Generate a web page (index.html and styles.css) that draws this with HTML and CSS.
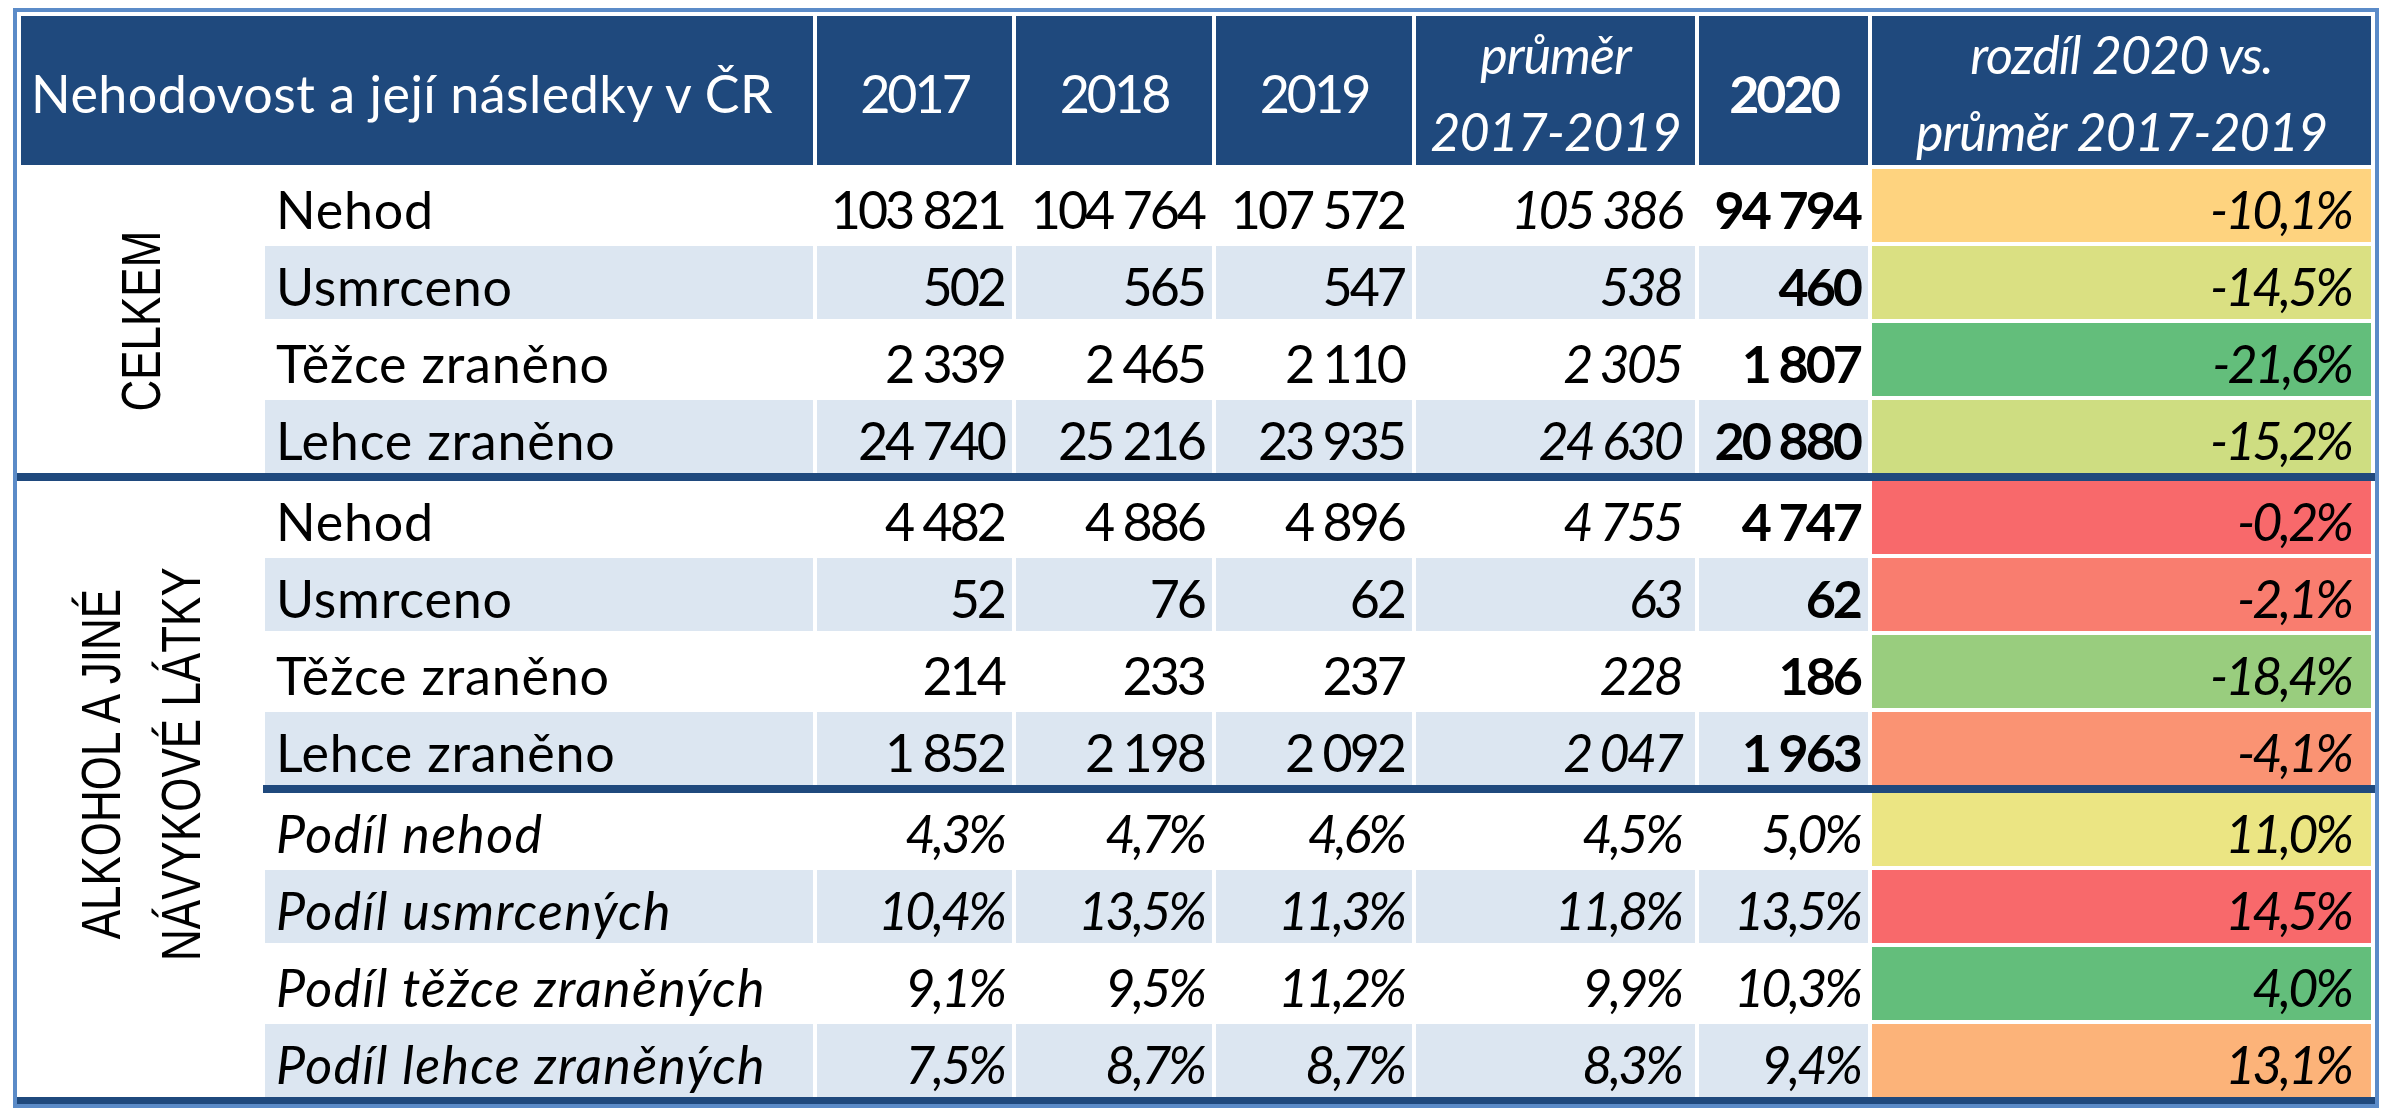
FILE: index.html
```html
<!DOCTYPE html>
<html lang="cs">
<head>
<meta charset="utf-8">
<title>Nehodovost a její následky v ČR</title>
<link rel="stylesheet" href="styles.css">
</head>
<body>
<div class="frame">
  <div class="table">
    <div class="h title">Nehodovost a její následky v ČR</div>
    <div class="h">2017</div>
    <div class="h">2018</div>
    <div class="h">2019</div>
    <div class="h h2">průměr<br>2017-2019</div>
    <div class="h b">2020</div>
    <div class="h h2">rozdíl 2020 vs.<br>průměr 2017-2019</div>

    <div class="side s1"><div class="vt">CELKEM</div></div>
    <div class="sep s-one"></div>
    <div class="side s2"><div class="vt">ALKOHOL A JINÉ<br>NÁVYKOVÉ LÁTKY</div></div>
    <div class="sep s-two"></div>
    <div class="sep s-bot"></div>

    <div class="c l">Nehod</div>
    <div class="c n">103 821</div><div class="c n">104 764</div><div class="c n">107 572</div>
    <div class="c n i avg">105 386</div><div class="c n b">94 794</div>
    <div class="c d" style="background:#FED37F">-10,1%</div>

    <div class="c l a">Usmrceno</div>
    <div class="c n a">502</div><div class="c n a">565</div><div class="c n a">547</div>
    <div class="c n a i avg">538</div><div class="c n a b">460</div>
    <div class="c d" style="background:#DAE082">-14,5%</div>

    <div class="c l">Těžce zraněno</div>
    <div class="c n">2 339</div><div class="c n">2 465</div><div class="c n">2 110</div>
    <div class="c n i avg">2 305</div><div class="c n b">1 807</div>
    <div class="c d" style="background:#63BE7B">-21,6%</div>

    <div class="c l a">Lehce zraněno</div>
    <div class="c n a">24 740</div><div class="c n a">25 216</div><div class="c n a">23 935</div>
    <div class="c n a i avg">24 630</div><div class="c n a b">20 880</div>
    <div class="c d" style="background:#CEDD81">-15,2%</div>

    <div class="c l">Nehod</div>
    <div class="c n">4 482</div><div class="c n">4 886</div><div class="c n">4 896</div>
    <div class="c n i avg">4 755</div><div class="c n b">4 747</div>
    <div class="c d" style="background:#F8696B">-0,2%</div>

    <div class="c l a">Usmrceno</div>
    <div class="c n a">52</div><div class="c n a">76</div><div class="c n a">62</div>
    <div class="c n a i avg">63</div><div class="c n a b">62</div>
    <div class="c d" style="background:#F97D6F">-2,1%</div>

    <div class="c l">Těžce zraněno</div>
    <div class="c n">214</div><div class="c n">233</div><div class="c n">237</div>
    <div class="c n i avg">228</div><div class="c n b">186</div>
    <div class="c d" style="background:#99CD7E">-18,4%</div>

    <div class="c l a">Lehce zraněno</div>
    <div class="c n a">1 852</div><div class="c n a">2 198</div><div class="c n a">2 092</div>
    <div class="c n a i avg">2 047</div><div class="c n a b">1 963</div>
    <div class="c d" style="background:#FA9373">-4,1%</div>

    <div class="c l i">Podíl nehod</div>
    <div class="c n i">4,3%</div><div class="c n i">4,7%</div><div class="c n i">4,6%</div>
    <div class="c n i avg">4,5%</div><div class="c n i">5,0%</div>
    <div class="c d" style="background:#EBE583">11,0%</div>

    <div class="c l a i">Podíl usmrcených</div>
    <div class="c n a i">10,4%</div><div class="c n a i">13,5%</div><div class="c n a i">11,3%</div>
    <div class="c n a i avg">11,8%</div><div class="c n a i">13,5%</div>
    <div class="c d" style="background:#F8696B">14,5%</div>

    <div class="c l i">Podíl těžce zraněných</div>
    <div class="c n i">9,1%</div><div class="c n i">9,5%</div><div class="c n i">11,2%</div>
    <div class="c n i avg">9,9%</div><div class="c n i">10,3%</div>
    <div class="c d" style="background:#63BE7B">4,0%</div>

    <div class="c l a i">Podíl lehce zraněných</div>
    <div class="c n a i">7,5%</div><div class="c n a i">8,7%</div><div class="c n a i">8,7%</div>
    <div class="c n a i avg">8,3%</div><div class="c n a i">9,4%</div>
    <div class="c d" style="background:#FCB379">13,1%</div>
  </div>
</div>
</body>
</html>
```
FILE: styles.css
```css
* { box-sizing: border-box; }

body {
  margin: 0;
  background: #ffffff;
}

.frame {
  margin: 8px 0 0 13px;
  width: 2366px;
  border: 4px solid #5B8BC8;
  padding: 4px 4px 0 4px;
  background: #ffffff;
}

.table {
  display: grid;
  grid-template-columns: 240px 548px 195px 196px 196px 279px 169px 499px;
  grid-template-rows: 149px repeat(4, 73px) 0 repeat(4, 73px) 0 repeat(4, 73px) 3px;
  column-gap: 4px;
  row-gap: 4px;
  font-family: Lato, "Open Sans", sans-serif;
  font-size: 52px;
  color: #000000;
}

.h {
  background: #1F497D;
  color: #ffffff;
  display: flex;
  align-items: center;
  justify-content: center;
  padding-top: 4px;
  white-space: nowrap;
  letter-spacing: -3px;
}

.title {
  grid-column: span 2;
  justify-content: flex-start;
  padding-left: 10px;
  letter-spacing: 0.5px;
}

.h2 {
  display: block;
  text-align: center;
  font-style: italic;
  line-height: 77px;
  padding-top: 0;
  letter-spacing: -1px;
}

.c {
  display: flex;
  align-items: center;
  padding-top: 7px;
  white-space: nowrap;
  min-width: 0;
}

.l {
  padding-left: 11px;
  letter-spacing: 0.8px;
}

.l.i { letter-spacing: 1.3px; }

.n {
  justify-content: flex-end;
  padding-right: 8px;
  letter-spacing: -3px;
}

.avg { padding-right: 14px; }

.a { background: #DCE6F1; }

.i { font-style: italic; }

.b { font-weight: 700; }

.d {
  justify-content: flex-end;
  padding-right: 20px;
  font-style: italic;
  letter-spacing: -3px;
}

.sep { background: #1F497D; }

.s-one {
  grid-row: 6;
  grid-column: 1 / -1;
  margin: -4px -4px;
}

.s-two {
  grid-row: 11;
  grid-column: 2 / -1;
  margin: -4px -4px -4px -2px;
}

.s-bot {
  grid-row: 16;
  grid-column: 1 / -1;
  margin: -4px -4px 0 -4px;
}

.side {
  grid-column: 1;
  display: flex;
  align-items: center;
  justify-content: center;
}

.s1 { grid-row: 2 / 6; }

.s2 {
  grid-row: 7 / 16;
  padding-bottom: 50px;
}

.vt {
  writing-mode: vertical-rl;
  transform: rotate(180deg) scaleY(0.8);
  font-family: "Liberation Sans", Arial, sans-serif;
  font-size: 55px;
  line-height: 80px;
  text-align: center;
  white-space: nowrap;
}
```
